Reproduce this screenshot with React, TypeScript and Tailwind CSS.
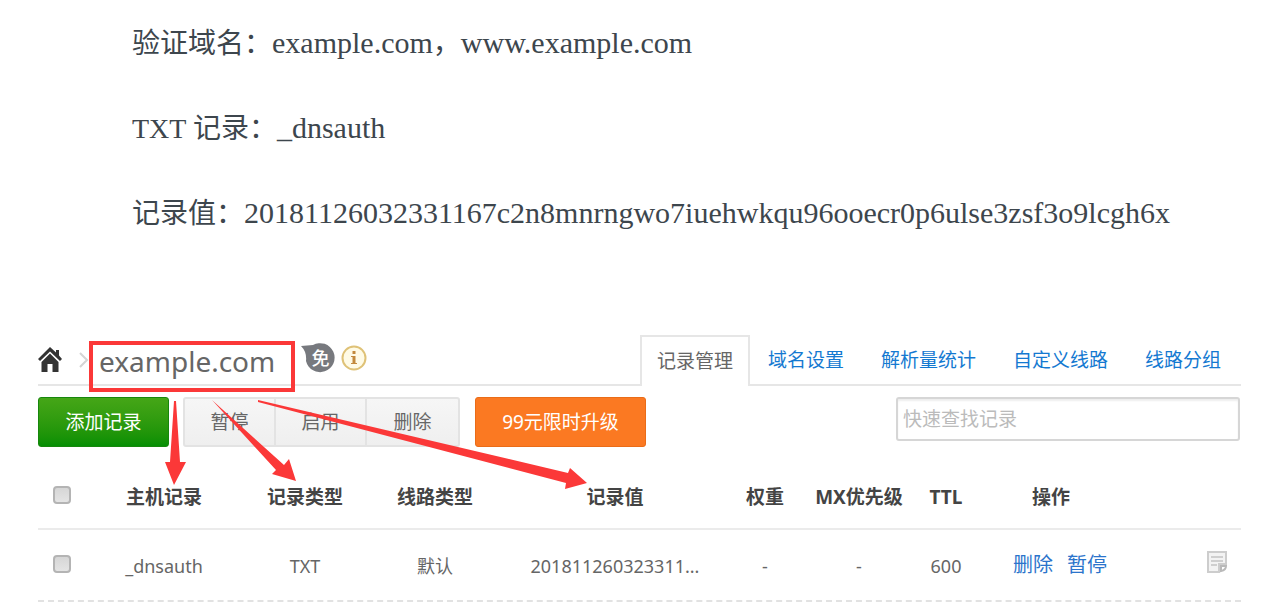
import React from "react";

const tabs = ["域名设置", "解析量统计", "自定义线路", "线路分组"];

const Tick = ({ label }: { label: string }) => (
  <input
    type="checkbox"
    aria-label={label}
    className="mb-[3px] ml-[15px] block size-[18px] appearance-none rounded-[4px] border-2 border-[#b4b4b4] bg-linear-to-b from-[#d6d6d6] to-[#e4e4e4]"
  />
);

const Latin = ({ children }: { children: string }) => (
  <span className="text-[30px] leading-none">{children}</span>
);

export default function App() {
  return (
    <main className="min-h-screen w-full bg-white font-['Noto_Sans','Noto_Sans_CJK_SC',sans-serif] text-[19px] text-[#666]">
      <section className="flex flex-col gap-[43px] pt-[23px] pl-[132px] font-['Liberation_Serif','Noto_Sans_CJK_SC',serif] text-[28px] leading-[42px] text-[#3d464d]">
        <p>
          验证域名：<Latin>example.com</Latin>，<Latin>www.example.com</Latin>
        </p>
        <p>
          TXT 记录：<Latin>_dnsauth</Latin>
        </p>
        <p className="whitespace-nowrap">
          记录值：<Latin>20181126032331167c2n8mnrngwo7iuehwkqu96ooecr0p6ulse3zsf3o9lcgh6x</Latin>
        </p>
      </section>

      <section className="relative mt-[100px] mr-[22px] ml-[38px]">
        <header className="flex h-[51px] items-end justify-between border-b-2 border-[#e6e6e6]">
          <div className="flex h-full items-center">
            <a href="#home" aria-label="首页">
              <svg width="24" height="26" viewBox="0 0 24 26" fill="#333">
                <path d="M12 0 18 5.500V3h3v5.500L24 12 22 14 12 4.500 2 14 0 12Z" />
                <path d="M12 6.500 20.500 15V25h-6v-8h-5v8h-6V15Z" />
              </svg>
            </a>
            <svg className="ml-[17px]" width="10" height="16" viewBox="0 0 10 16" fill="none" stroke="#d4d4d4" strokeWidth="2">
              <path d="m1 1 7 7-7 7" />
            </svg>
            <h1 className="ml-[10px] pt-[2px] text-[28px] leading-[42px] text-[#666]">example.com</h1>
          </div>
          <nav className="flex h-[49px]">
            <a href="#records" className="-mb-[2px] flex h-[51px] items-center border-2 border-b-0 border-[#e6e6e6] bg-white px-[15px]">
              记录管理
            </a>
            <div className="flex items-center gap-[37px] pt-[2px] pr-[20px] pl-[18px] text-[#1479d1]">
              {tabs.map((t) => (
                <a key={t} href={`#${t}`}>{t}</a>
              ))}
            </div>
          </nav>
        </header>

        <div className="mt-[11px] flex items-start">
          <button className="h-[50px] w-[131px] rounded-[3px] border border-[#16870c] bg-linear-to-b from-[#45a617] to-[#048f04] text-white">添加记录</button>
          <div className="ml-[14px] flex h-[50px] divide-x-2 divide-[#e3e3e3] rounded-[3px] border-2 border-[#e3e3e3] bg-linear-to-b from-[#f6f6f6] to-[#efefef]">
            {["暂停", "启用", "删除"].map((t) => (
              <button key={t} className="w-[91px]">{t}</button>
            ))}
          </div>
          <button className="ml-[15px] h-[50px] w-[171px] rounded-[3px] border border-[#ea6c18] bg-[#fb7922] text-white">99元限时升级</button>
          <input
            aria-label="快速查找记录"
            placeholder="快速查找记录"
            className="mr-[1px] ml-auto h-[44px] w-[344px] rounded-[3px] border-2 border-[#d6d6d6] px-[5px] shadow-[inset_0_2px_2px_#eee] placeholder:text-[#bbb]"
          />
        </div>

        <div className="mt-[17px] border-b-2 border-dashed border-[#e2e2e2]">
          <table className="w-full table-fixed border-collapse text-center">
            <colgroup>
              <col className="w-[58px]" />
              <col className="w-[136px]" />
              <col className="w-[146px]" />
              <col className="w-[114px]" />
              <col className="w-[246px]" />
              <col className="w-[54px]" />
              <col className="w-[134px]" />
              <col className="w-[40px]" />
              <col className="w-[170px]" />
              <col />
            </colgroup>
            <thead className="text-[#444]">
              <tr className="h-[65px] border-b-2 border-[#ebebeb] whitespace-nowrap">
                <th><Tick label="全选" /></th>
                {["主机记录", "记录类型", "线路类型", "记录值", "权重", "MX优先级", "TTL", "操作"].map((t) => (
                  <th key={t} className="pt-[2px] font-bold">{t}</th>
                ))}
                <th />
              </tr>
            </thead>
            <tbody>
              <tr className="h-[71px] text-[18px] whitespace-nowrap">
                <td><Tick label="选择 _dnsauth" /></td>
                <td className="pt-[2px]">_dnsauth</td>
                <td className="pt-[2px]">TXT</td>
                <td className="pt-[2px]">默认</td>
                <td className="pt-[2px]">201811260323311...</td>
                <td className="pt-[2px]">-</td>
                <td className="pt-[2px]">-</td>
                <td className="pt-[2px]">600</td>
                <td>
                  <div className="flex justify-center gap-[14px] pl-[18px] text-[20px] text-[#2b74cb]">
                    <button>删除</button>
                    <button>暂停</button>
                  </div>
                </td>
                <td>
                  <button aria-label="备注" className="mr-[14px] ml-auto block pb-[6px]">
                    <svg width="20" height="22" viewBox="0 0 20 22" fill="none">
                      <path d="M1 1h18v12h-7v8H1Z" fill="#f3f3f3" stroke="#cdcdcd" strokeWidth="2" />
                      <path d="M4 6h12M4 10h12M4 14h6" stroke="#cfcfcf" strokeWidth="2" />
                      <path d="M14 20v-5h5q0 4-5 5Z" stroke="#b9b9b9" strokeWidth="2" />
                    </svg>
                  </button>
                </td>
              </tr>
            </tbody>
          </table>
        </div>

        <div className="pointer-events-none absolute top-[6px] left-[51px] h-[51px] w-[206px] border-4 border-[#fb3838]" />
        <div className="absolute top-[8px] left-[263px] flex items-center gap-[6px]">
          <span className="relative flex h-[30px] w-[34px] items-center justify-center pl-[5px] text-[18px] font-medium text-white">
            <svg className="absolute inset-0" width="34" height="30" viewBox="0 0 34 30" fill="#77797e">
              <path d="M0 3 12 2A14.500 14.500 0 1 1 5 18Q6 9 0 3Z" />
            </svg>
            <span className="relative leading-none">免</span>
          </span>
          <svg width="26" height="26" viewBox="0 0 26 26">
            <circle cx="13" cy="13" r="11.500" fill="#fffbe6" stroke="#dfc277" strokeWidth="2" />
            <path d="M11.500 6h3v3h-3zM10 11h4.500v7H16v1h-6v-1h1.500v-6H10z" fill="#c38a3c" />
          </svg>
        </div>
        <svg className="pointer-events-none absolute top-0 left-0" width="560" height="160" viewBox="38 335 560 160" fill="#fb3838">
          <path d="M174 401h2l4 61h6l-12 23-9-23h5Z" />
          <path d="M212 400 284 465l5-6 7 22-24-7 4-4Z" />
          <path d="M258 400 568 473l2-5 17 15-22 6 1-6L258 402Z" />
        </svg>
      </section>
    </main>
  );
}
